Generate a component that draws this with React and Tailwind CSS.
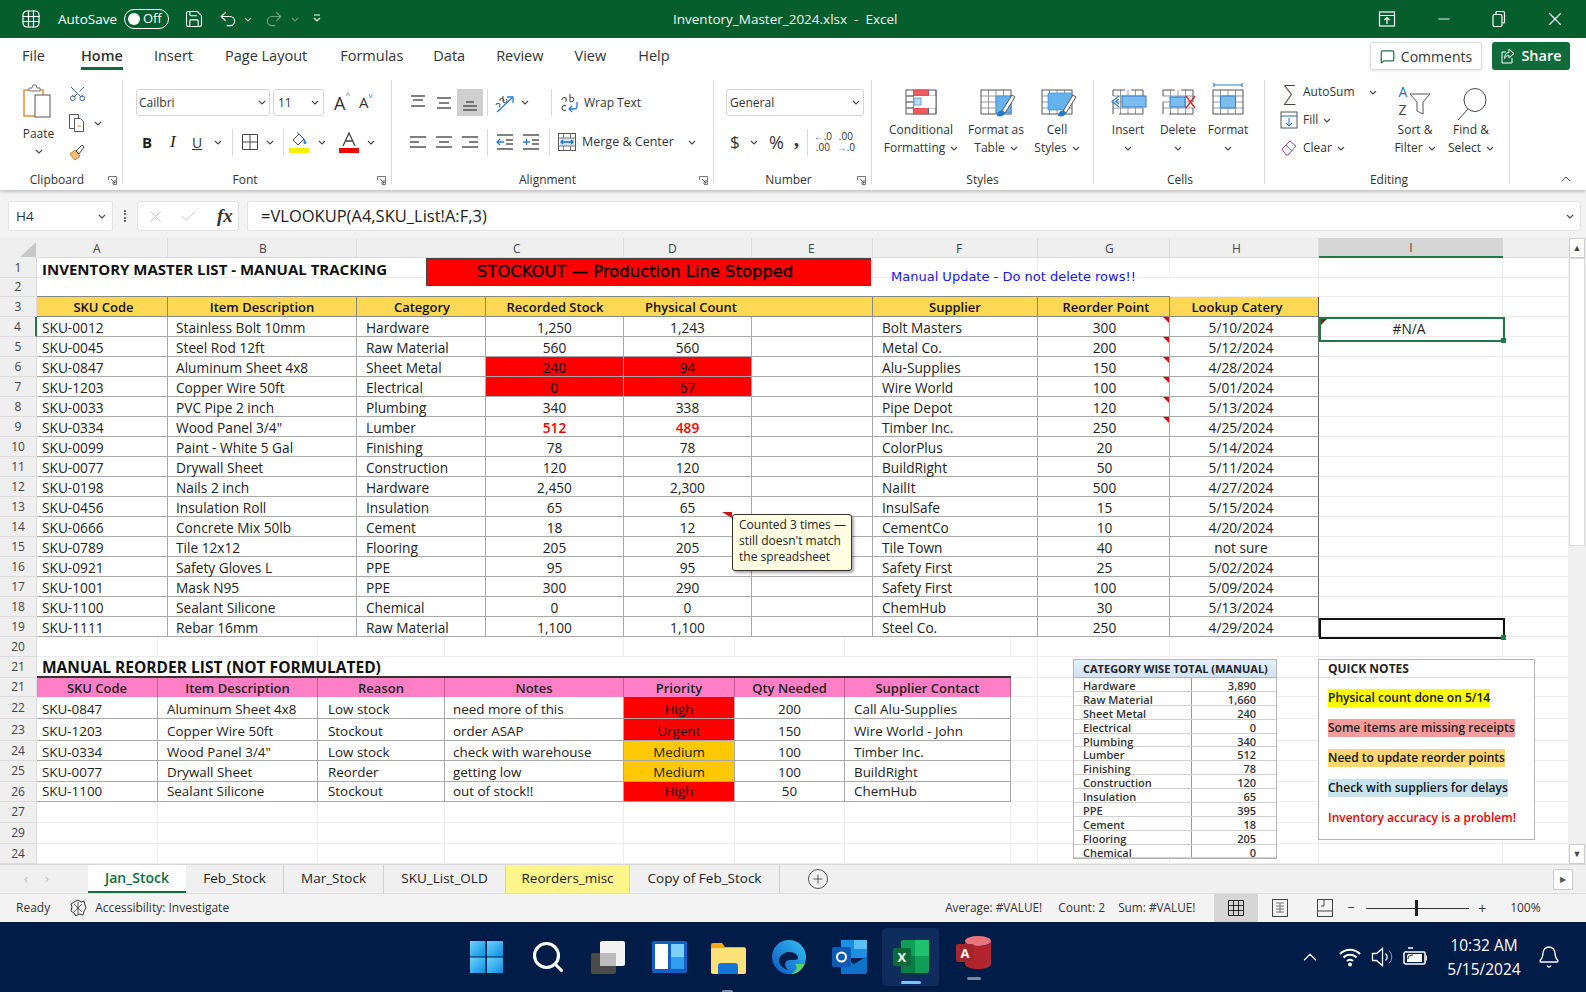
import { Scissors, Search, Bell, ChevronUp, X, Minus, Save, Undo2, Redo2, Check, Plus, MessageSquare } from 'lucide-react'

const MAIN_COLS = 'grid grid-rows-1 grid-cols-[131px_189px_129px_138px_128px_121px_165px_132px_149px_184px_65px]'
const LOW_COLS = 'grid grid-rows-1 grid-cols-[121px_160px_127px_179px_111px_110px_166px_27px_132px_149px_184px_65px]'

const stock = [
  [4, 'SKU-0012', 'Stainless Bolt 10mm', 'Hardware', '1,250', '1,243', 'Bolt Masters', '300', '5/10/2024'],
  [5, 'SKU-0045', 'Steel Rod 12ft', 'Raw Material', '560', '560', 'Metal Co.', '200', '5/12/2024'],
  [6, 'SKU-0847', 'Aluminum Sheet 4x8', 'Sheet Metal', '240', '94', 'Alu-Supplies', '150', '4/28/2024'],
  [7, 'SKU-1203', 'Copper Wire 50ft', 'Electrical', '0', '67', 'Wire World', '100', '5/01/2024'],
  [8, 'SKU-0033', 'PVC Pipe 2 inch', 'Plumbing', '340', '338', 'Pipe Depot', '120', '5/13/2024'],
  [9, 'SKU-0334', 'Wood Panel 3/4"', 'Lumber', '512', '489', 'Timber Inc.', '250', '4/25/2024'],
  [10, 'SKU-0099', 'Paint - White 5 Gal', 'Finishing', '78', '78', 'ColorPlus', '20', '5/14/2024'],
  [11, 'SKU-0077', 'Drywall Sheet', 'Construction', '120', '120', 'BuildRight', '50', '5/11/2024'],
  [12, 'SKU-0198', 'Nails 2 inch', 'Hardware', '2,450', '2,300', 'NailIt', '500', '4/27/2024'],
  [13, 'SKU-0456', 'Insulation Roll', 'Insulation', '65', '65', 'InsulSafe', '15', '5/15/2024'],
  [14, 'SKU-0666', 'Concrete Mix 50lb', 'Cement', '18', '12', 'CementCo', '10', '4/20/2024'],
  [15, 'SKU-0789', 'Tile 12x12', 'Flooring', '205', '205', 'Tile Town', '40', 'not sure'],
  [16, 'SKU-0921', 'Safety Gloves L', 'PPE', '95', '95', 'Safety First', '25', '5/02/2024'],
  [17, 'SKU-1001', 'Mask N95', 'PPE', '300', '290', 'Safety First', '100', '5/09/2024'],
  [18, 'SKU-1100', 'Sealant Silicone', 'Chemical', '0', '0', 'ChemHub', '30', '5/13/2024'],
  [19, 'SKU-1111', 'Rebar 16mm', 'Raw Material', '1,100', '1,100', 'Steel Co.', '250', '4/29/2024'],
]

const reorders = [
  [22, 'h-[22px]', 'SKU-0847', 'Aluminum Sheet 4x8', 'Low stock', 'need more of this', 'High', '200', 'Call Alu-Supplies'],
  [23, 'h-[22px]', 'SKU-1203', 'Copper Wire 50ft', 'Stockout', 'order ASAP', 'Urgent', '150', 'Wire World - John'],
  [24, 'h-[20px]', 'SKU-0334', 'Wood Panel 3/4"', 'Low stock', 'check with warehouse', 'Medium', '100', 'Timber Inc.'],
  [25, 'h-[21px]', 'SKU-0077', 'Drywall Sheet', 'Reorder', 'getting low', 'Medium', '100', 'BuildRight'],
  [26, 'h-[20px]', 'SKU-1100', 'Sealant Silicone', 'Stockout', 'out of stock!!', 'High', '50', 'ChemHub'],
]

const categories = [
  ['Hardware', '3,890'], ['Raw Material', '1,660'], ['Sheet Metal', '240'], ['Electrical', '0'], ['Plumbing', '340'],
  ['Lumber', '512'], ['Finishing', '78'], ['Construction', '120'], ['Insulation', '65'], ['PPE', '395'],
  ['Cement', '18'], ['Flooring', '205'], ['Chemical', '0'],
]

function Chevron({ className = '' }) {
  return (
    <svg width="8" height="5" viewBox="0 0 8 5" className={`shrink-0 ${className}`}>
      <path d="M1 1l3 3 3-3" fill="none" stroke="#444" strokeWidth="1.1" />
    </svg>
  )
}

function Launcher() {
  return (
    <svg width="9" height="9" viewBox="0 0 9 9" className="justify-self-end mr-[5px]">
      <path d="M.5 4V.5H8.5V8.5H5" fill="none" stroke="#777" />
      <path d="M3 3l4 4M7 4v3H4" fill="none" stroke="#555" />
    </svg>
  )
}

function Group({ width, label, pad = '', launcher, children }) {
  return (
    <div className={`${width} h-[104px] border-r border-[#d9d9d9] flex flex-col shrink-0`}>
      <div className="h-[93px] shrink-0 flex">{children}</div>
      <div className="grid grid-cols-[1fr_auto_1fr] items-center h-[14px] shrink-0 text-[12px] leading-[14px] text-[#333]">
        <span />
        <span className={pad}>{label}</span>
        {launcher ? <Launcher /> : <span />}
      </div>
    </div>
  )
}

function BigButton({ width, lines, icon }) {
  return (
    <div className={`${width} flex flex-col items-center pt-[8px] shrink-0`}>
      <div className="h-[33px] flex items-start justify-center">{icon}</div>
      {lines.map((l, i) => (
        <div key={i} className="h-[18px] flex items-center gap-[5px] text-[12px] leading-[18px] text-[#333] whitespace-nowrap">
          {l}{i === 1 && <Chevron />}
        </div>
      ))}
    </div>
  )
}

function VSep({ className = '' }) {
  return <div className={`w-px h-[27px] bg-[#d9d9d9] shrink-0 ${className}`} />
}

function Lines({ ys, x1 = [3, 3, 3], x2 = [19, 19, 19] }) {
  return (
    <svg width="22" height="20" viewBox="0 0 22 20">
      {ys.map((y, i) => <line key={i} x1={x1[i]} x2={x2[i]} y1={y} y2={y} stroke="#555" strokeWidth="1.5" />)}
    </svg>
  )
}

function TableIcon({ children, cuts }) {
  return (
    <svg width="36" height="28" viewBox="0 0 36 28" className="overflow-visible">
      <rect x="3" y="2" width="30" height="24" fill="#fff" />
      <path d="M3 8h30M3 14h30M3 20h30M10.500 2v24M18 2v24M25.500 2v24" stroke="#999" fill="none" />
      <rect x="3" y="2" width="30" height="24" fill="none" stroke="#555" strokeDasharray={cuts} />
      {children}
    </svg>
  )
}

function Brush() {
  return (
    <>
      <path d="M24 23L34 7l3 2-10 16z" fill="#fff" stroke="#555" />
      <path d="M19 28c0-4 3-6 6-5l2 2c-1 3-4 4-8 3z" fill="#1f7dcc" />
    </>
  )
}

function TitleBar() {
  return (
    <div className="h-[38px] bg-[#075e2d] text-white flex items-center text-[13.5px] shrink-0 relative">
      <svg width="20" height="20" viewBox="0 0 20 20" className="ml-[21px]">
        <g fill="none" stroke="#fff" strokeWidth="1.2">
          <rect x="2" y="2" width="16" height="16" rx="4" />
          <path d="M7.500 1.500v17M12.500 1.500v17M1.500 7.500h17M1.500 12.500h17" />
        </g>
      </svg>
      <span className="ml-[17px]">AutoSave</span>
      <div className="ml-[7px] w-[45px] h-[20px] rounded-full border border-white flex items-center pl-[3px] gap-[3px] text-[13px]">
        <span className="w-[12px] h-[12px] rounded-full bg-white" />
        <span>Off</span>
      </div>
      <Save size={20} strokeWidth={1.3} className="ml-[15px]" />
      <Undo2 size={20} strokeWidth={1.4} className="ml-[14px]" />
      <Chevron className="ml-[6px] invert" />
      <Redo2 size={20} strokeWidth={1.4} className="ml-[12px] text-[#6f9f84]" />
      <Chevron className="ml-[7px] invert opacity-60" />
      <svg width="10" height="10" viewBox="0 0 10 10" className="ml-[13px]">
        <path d="M2 1h6M2 4l3 3 3-3" fill="none" stroke="#fff" strokeWidth="1.2" />
      </svg>
      <div className="ml-[351px] w-[226px] whitespace-pre text-[13.500px] text-[#f1f5f2]">Inventory_Master_2024.xlsx  -  Excel</div>
      <svg width="18" height="18" viewBox="0 0 18 18" className="ml-[479px]">
        <g fill="none" stroke="#fff" strokeWidth="1.2">
          <rect x="1.500" y="2" width="15" height="14" />
          <path d="M1.500 5.500h15M9 8v6M6.500 10L9 7.500l2.500 2.500" />
        </g>
      </svg>
      <Minus size={18} strokeWidth={1.2} className="ml-[39px]" />
      <svg width="16" height="18" viewBox="0 0 16 18" className="ml-[38px]">
        <g fill="none" stroke="#fff" strokeWidth="1.2">
          <rect x="2" y="4.500" width="9" height="12" rx="1.500" />
          <path d="M5 4V2.500A1 1 0 0 1 6 1.500h6A1.500 1.500 0 0 1 13.500 3v9a1 1 0 0 1-1 1H11.500" />
        </g>
      </svg>
      <X size={22} strokeWidth={1.2} className="ml-[37px]" />
    </div>
  )
}

function TabRow() {
  const tabs = [['File', 'ml-[22px]'], ['Home', 'ml-[36px] font-semibold'], ['Insert', 'ml-[31px]'], ['Page Layout', 'ml-[32px]'], ['Formulas', 'ml-[33px]'], ['Data', 'ml-[30px]'], ['Review', 'ml-[31px]'], ['View', 'ml-[31px]'], ['Help', 'ml-[32px]']]
  return (
    <div className="h-[38px] bg-white flex items-center text-[14.500px] text-[#333] shrink-0 pb-[2px]">
      {tabs.map(([t, cls]) => (
        <div key={t} className={`${cls} relative h-[36px] flex items-center`}>
          {t}
          {t === 'Home' && <span className="absolute left-0 right-0 top-[29px] h-[3px] bg-[#0f6b3a]" />}
        </div>
      ))}
      <div className="ml-auto w-[112px] h-[28px] border border-[#dcdcdc] rounded-[3px] flex items-center justify-center gap-[6px] text-[14px] shadow-sm">
        <MessageSquare size={15} className="text-[#1e7a46]" />
        Comments
      </div>
      <div className="ml-[10px] mr-[16px] w-[78px] h-[28px] bg-[#0f6b3a] text-white rounded-[3px] flex items-center justify-center gap-[6px] font-semibold">
        <svg width="15" height="16" viewBox="0 0 15 16">
          <path d="M6 4H2v11h10V10M9 1l5 4.500-5 4.500V7.500C6 7.500 5 9 4.500 11c0-4 1.500-6.500 4.500-6.500z" fill="none" stroke="#fff" />
        </svg>
        Share
      </div>
    </div>
  )
}

function Ribbon() {
  return (
    <div className="h-[114px] pt-[4px] bg-white flex items-start shrink-0 shadow-[0_2px_3px_rgba(0,0,0,0.2)] relative z-10">
      <Group width="w-[123px]" label="Clipboard" launcher pad="pr-[8px]">
        <div className="w-[66px] pl-[13px] pr-[2px] flex flex-col items-center pt-[4px]">
          <svg width="36" height="34" viewBox="0 0 36 34">
            <path d="M3 6h19v26H3z" fill="#fff" stroke="#e69138" strokeWidth="1.500" />
            <path d="M8 6V4h3l1-3h3l1 3h3v3H8z" fill="#fff" stroke="#777" />
            <rect x="14" y="11" width="15" height="22" fill="#fff" stroke="#555" />
          </svg>
          <div className="text-[12px] text-[#333] mt-[7px] leading-[18px]">Paate</div>
          <Chevron className="mt-[6px]" />
        </div>
        <div className="flex flex-col items-start pl-[2px] pt-[2px]">
          <Scissors size={19} strokeWidth={1.2} className="text-[#2a5d8f] rotate-[-90deg] mt-[2px]" />
          <div className="flex items-center gap-[8px] mt-[10px]">
            <svg width="18" height="20" viewBox="0 0 18 20">
              <g fill="#fff" stroke="#555">
                <path d="M1.500 1.500h9v14h-9z" />
                <path d="M6.500 5.500h6l3 3v10h-9z" />
              </g>
              <path d="M9 13h4" stroke="#e69138" />
            </svg>
            <Chevron />
          </div>
          <svg width="18" height="18" viewBox="0 0 18 18" className="mt-[10px]">
            <path d="M2 11l5-4 5 6-5 4z" fill="#f5c07a" stroke="#d9761f" />
            <path d="M8 8l6-6 2 2-5 7z" fill="#fff" stroke="#444" />
          </svg>
        </div>
      </Group>

      <Group width="w-[269px]" label="Font" launcher pad="pr-[24px]">
        <div className="pl-[13px] pt-[9px] flex flex-col">
          <div className="flex items-center h-[27px]">
            <div className="w-[134px] h-[27px] border border-[#d4d4d4] rounded-[3px] flex items-center justify-between px-[2px] pr-[3px] text-[12px] text-[#333]">Cailbri<Chevron /></div>
            <div className="ml-[3px] w-[51px] h-[27px] border border-[#d4d4d4] rounded-[3px] flex items-center justify-between px-[4px] text-[12px] text-[#333]">11<Chevron /></div>
            <span className="ml-[10px] text-[18px] text-[#333] leading-none">A<sup className="text-[8px] text-[#666] align-[8px]">^</sup></span>
            <span className="ml-[9px] text-[15px] text-[#333] leading-none">A<sup className="text-[8px] text-[#2b7cd3] align-[6px]">v</sup></span>
          </div>
          <div className="flex items-center h-[28px] mt-[12px] text-[#222]">
            <span className="ml-[6px] w-[12px] font-bold text-[15px]">B</span>
            <span className="ml-[16px] w-[10px] italic font-['Liberation_Serif'] text-[17px]">I</span>
            <span className="ml-[12px] w-[12px] underline text-[14px] text-[#333]">U</span>
            <Chevron className="ml-[10px]" />
            <VSep className="ml-[10px]" />
            <svg width="18" height="18" viewBox="0 0 18 18" className="ml-[8px]">
              <path d="M1.500 1.500h15v15h-15zM9 1.500v15M1.500 9h15" fill="none" stroke="#444" />
            </svg>
            <Chevron className="ml-[7px]" />
            <VSep className="ml-[9px]" />
            <svg width="20" height="22" viewBox="0 0 20 22" className="ml-[5px]">
              <path d="M4 9l6-6 5 5-6 6z" fill="#fff" stroke="#444" />
              <path d="M10 3L8 1M15 8c1 2 2 3 2 4s-2 1-2 0 0-2 0-4z" fill="#2b7cd3" stroke="#2b7cd3" />
              <rect x="0" y="17" width="20" height="5" fill="#ffee00" />
            </svg>
            <Chevron className="ml-[9px]" />
            <svg width="20" height="22" viewBox="0 0 20 22" className="ml-[13px]">
              <path d="M4 15L10 2l6 13M6.500 10h7" fill="none" stroke="#444" strokeWidth="1.300" />
              <rect x="0" y="17" width="20" height="5" fill="#f00000" />
            </svg>
            <Chevron className="ml-[8px]" />
          </div>
        </div>
      </Group>

      <Group width="w-[322px]" label="Alignment" launcher pad="pr-[10px]">
        <div className="pl-[13px] pt-[9px] flex flex-col">
          <div className="flex items-center h-[27px]">
            <div className="w-[26px] flex justify-center"><Lines ys={[3, 7, 13]} x1={[4, 6, 4]} x2={[18, 16, 18]} /></div>
            <div className="w-[26px] flex justify-center"><Lines ys={[5, 10, 15]} x1={[4, 6, 4]} x2={[18, 16, 18]} /></div>
            <div className="w-[26px] h-[27px] bg-[#cfcfcf] flex items-center justify-center"><Lines ys={[9, 13, 17]} x1={[7, 4, 4]} x2={[15, 18, 18]} /></div>
            <VSep className="ml-[4px]" />
            <svg width="24" height="22" viewBox="0 0 24 22" className="ml-[5px]">
              <path d="M3 13a2 2 0 1 1 3 2M7 9a2 2 0 1 1 3 1M10 4v5a2 2 0 1 0 3-2" fill="none" stroke="#555" strokeWidth="1.100" />
              <path d="M4 20L19 6M14 5l6 0 0 6" fill="none" stroke="#2b7cd3" strokeWidth="1.300" />
            </svg>
            <Chevron className="ml-[4px]" />
            <VSep className="ml-[22px]" />
            <svg width="20" height="20" viewBox="0 0 20 20" className="ml-[7px]">
              <path d="M3 7a2.200 2.200 0 1 1 4 1V5M11 1v7a2.200 2.200 0 1 0 0-3M7 13a2.500 2.500 0 1 0 0 4" fill="none" stroke="#555" strokeWidth="1.100" />
              <path d="M18 9v4a3 3 0 0 1-3 3h-4M13 13l-3 3 3 3" fill="none" stroke="#2b7cd3" strokeWidth="1.300" />
            </svg>
            <span className="ml-[5px] text-[12px] text-[#333]">Wrap Text</span>
          </div>
          <div className="flex items-center h-[28px] mt-[12px]">
            <div className="w-[26px] flex justify-center"><Lines ys={[5, 10, 15]} x2={[19, 12, 19]} /></div>
            <div className="w-[26px] flex justify-center"><Lines ys={[5, 10, 15]} x1={[3, 6, 3]} x2={[19, 16, 19]} /></div>
            <div className="w-[26px] flex justify-center"><Lines ys={[5, 10, 15]} x1={[3, 10, 3]} /></div>
            <VSep className="ml-[4px]" />
            <svg width="20" height="18" viewBox="0 0 20 18" className="ml-[7px]">
              <path d="M2 2h16M11 7h7M11 11h7M2 16h16" stroke="#555" fill="none" strokeWidth="1.300" />
              <path d="M9 9H2M5 6L2 9l3 3" stroke="#2b7cd3" fill="none" strokeWidth="1.300" />
            </svg>
            <svg width="20" height="18" viewBox="0 0 20 18" className="ml-[6px]">
              <path d="M2 2h16M11 7h7M11 11h7M2 16h16" stroke="#555" fill="none" strokeWidth="1.300" />
              <path d="M2 9h7M5.500 6v6" stroke="#2b7cd3" fill="none" strokeWidth="1.300" />
            </svg>
            <VSep className="ml-[8px]" />
            <svg width="20" height="20" viewBox="0 0 20 20" className="ml-[7px]">
              <rect x="1.500" y="1.500" width="17" height="17" fill="#fff" stroke="#555" />
              <rect x="3" y="6" width="14" height="8" fill="#cfe4f7" />
              <path d="M1.500 6h17M1.500 14h17M6.500 1.500V6M13.500 1.500V6M6.500 14v4.500M13.500 14v4.500" stroke="#777" />
              <path d="M4 10h12M6 8l-2 2 2 2M14 8l2 2-2 2" stroke="#1f6fc4" fill="none" strokeWidth="1.300" />
            </svg>
            <span className="ml-[5px] text-[12.500px] text-[#333]">Merge &amp; Center</span>
            <Chevron className="ml-[14px]" />
          </div>
        </div>
      </Group>

      <Group width="w-[158px]" label="Number" launcher pad="pr-[8px]">
        <div className="pl-[12px] pt-[9px] flex flex-col">
          <div className="w-[138px] h-[27px] border border-[#d4d4d4] rounded-[3px] flex items-center justify-between px-[3px] text-[12px] text-[#333]">General<Chevron /></div>
          <div className="flex items-center h-[28px] mt-[12px] text-[#333]">
            <span className="w-[14px] text-[17px] ml-[4px]">$</span>
            <Chevron className="ml-[6px]" />
            <span className="ml-[11px] text-[18px]">%</span>
            <span className="ml-[10px] text-[20px] font-bold font-['Liberation_Serif'] leading-none mt-[-6px]">,</span>
            <VSep className="ml-[8px]" />
            <div className="ml-[5px] w-[20px] text-[10px] leading-[11px] text-center"><span className="text-[#1f6fc4]">←</span>.0<br />.00</div>
            <div className="ml-[3px] w-[20px] text-[10px] leading-[11px] text-center">.00<br /><span className="text-[#1f6fc4]">→</span>.0</div>
          </div>
        </div>
      </Group>

      <Group width="w-[222px]" label="Styles">
        <div className="pl-[14px] flex">
          <BigButton width="w-[70px]" lines={['Conditional', 'Formatting']} icon={
            <TableIcon>
              <rect x="10.500" y="2" width="15" height="6" fill="#f15b5b" stroke="#c33" strokeWidth=".5" />
              <rect x="10.500" y="20" width="15" height="6" fill="#f15b5b" stroke="#c33" strokeWidth=".5" />
              <rect x="11" y="8" width="22" height="12" fill="#fff" />
              <rect x="11" y="10" width="7" height="7" fill="#bcd9f2" stroke="#6aa6d9" />
              <path d="M3 8h8M3 14h8M3 20h8M25.500 20v6M33 2v24" stroke="#666" />
            </TableIcon>
          } />
          <BigButton width="w-[80px]" lines={['Format as', 'Table']} icon={
            <TableIcon>
              <rect x="18" y="8" width="15" height="17" fill="#64b2ee" stroke="#2b7cd3" strokeWidth=".6" />
              <Brush />
            </TableIcon>
          } />
          <BigButton width="w-[42px]" lines={['Cell', 'Styles']} icon={
            <TableIcon>
              <path d="M9 5h24v8L26 22H9z" fill="#64b2ee" stroke="#2b7cd3" strokeWidth=".6" />
              <Brush />
            </TableIcon>
          } />
        </div>
      </Group>

      <Group width="w-[171px]" label="Cells" pad="pl-[2px]">
        <div className="pl-[9px] flex">
          <BigButton width="w-[50px]" lines={['Insert', '']} icon={
            <TableIcon cuts="12 6 24 6 30 6">
              <rect x="12" y="8" width="24" height="11" fill="#7cbcef" stroke="#2b7cd3" />
              <path d="M9 8L2 13.500 9 19M9 11l-3 2.500 3 2.500" fill="none" stroke="#2b7cd3" strokeWidth="1.200" />
            </TableIcon>
          } />
          <BigButton width="w-[50px]" lines={['Delete', '']} icon={
            <TableIcon cuts="12 6 24 6 30 6">
              <rect x="10" y="9" width="15" height="10" fill="#7cbcef" stroke="#2b7cd3" />
              <path d="M26 8l9 12M35 8l-9 12" stroke="#e02020" strokeWidth="1.300" />
            </TableIcon>
          } />
          <BigButton width="w-[50px]" lines={['Format', '']} icon={
            <TableIcon>
              <rect x="10.500" y="8" width="15" height="12" fill="#7cbcef" stroke="#2b7cd3" />
              <path d="M4 -3h28M4 -5v4M32 -5v4" stroke="#2b7cd3" strokeWidth="1.200" />
            </TableIcon>
          } />
        </div>
      </Group>

      <Group width="w-[245px]" label="Editing" pad="pl-[4px]">
        <div className="w-[118px] pl-[9px] flex flex-col text-[12px] text-[#333] shrink-0 mt-[-2px]">
          <div className="h-[28px] flex items-center">
            <span className="ml-[9px] w-[15px] text-[21px] text-[#444] leading-none font-light">∑</span>
            <span className="ml-[5px]">AutoSum</span>
            <Chevron className="ml-[14px]" />
          </div>
          <div className="h-[28px] flex items-center">
            <svg width="18" height="18" viewBox="0 0 18 18" className="ml-[6px]">
              <rect x="1" y="1" width="16" height="16" fill="#fff" stroke="#555" />
              <path d="M1 5h16M9 7v8M6 12l3 3 3-3" stroke="#1f6fc4" fill="none" />
            </svg>
            <span className="ml-[5px]">Fill</span>
            <Chevron className="ml-[5px]" />
          </div>
          <div className="h-[28px] flex items-center">
            <svg width="18" height="18" viewBox="0 0 18 18" className="ml-[6px]">
              <path d="M2 10l8-8 6 5-8 9H6z" fill="#fff" stroke="#a4478f" />
              <path d="M6 6l6 6" stroke="#a4478f" />
            </svg>
            <span className="ml-[5px]">Clear</span>
            <Chevron className="ml-[5px]" />
          </div>
        </div>
        <BigButton width="w-[64px]" lines={['Sort &', 'Filter']} icon={
          <div className="flex items-start h-[33px]">
            <div className="flex flex-col text-[14px] leading-[18px] mt-[-5px]">
              <span className="text-[#1f6fc4]">A</span>
              <span className="text-[#444]">Z</span>
            </div>
            <svg width="22" height="22" viewBox="0 0 22 22" className="mt-[5px] ml-[2px]">
              <path d="M1 1h20l-7 8v12l-6-3V9z" fill="#fff" stroke="#555" />
            </svg>
          </div>
        } />
        <BigButton width="w-[48px]" lines={['Find &', 'Select']} icon={
          <svg width="34" height="33" viewBox="0 0 34 33">
            <ellipse cx="21" cy="12" rx="11" ry="11.500" fill="#fff" stroke="#444" />
            <path d="M14 21L4 32" stroke="#444" />
          </svg>
        } />
      </Group>
      <ChevronUp size={16} strokeWidth={1.3} className="ml-[48px] mt-[91px] text-[#333]" />
    </div>
  )
}

function FormulaBar() {
  return (
    <div className="h-[48px] bg-[#f3f3f3] flex items-center shrink-0 pt-[4px]">
      <div className="ml-[8px] w-[105px] h-[30px] bg-white border border-[#e2e2e2] rounded-[3px] flex items-center justify-between pl-[7px] pr-[6px] text-[13.500px] text-[#333]">H4<Chevron /></div>
      <div className="ml-[11px] w-[3px] h-[12px] border-l-2 border-dotted border-[#666]" />
      <div className="ml-[10px] w-[102px] h-[30px] bg-white border border-[#e2e2e2] rounded-[3px] flex items-center pl-[8px] text-[#bbb]">
        <X size={19} strokeWidth={1.1} />
        <Check size={19} strokeWidth={1.1} className="ml-[14px]" />
        <span className="ml-[19px] font-['Liberation_Serif'] italic font-semibold text-[19px] text-[#333]">fx</span>
      </div>
      <div className="ml-[8px] w-[1334px] h-[30px] bg-white border border-[#e2e2e2] rounded-[3px] flex items-center justify-between pl-[13px] pr-[6px] text-[16.500px] text-[#222]">
        =VLOOKUP(A4,SKU_List!A:F,3)
        <Chevron />
      </div>
    </div>
  )
}

function RowHead({ n, active, className = 'h-[20px]' }) {
  return (
    <div className={`w-[37px] shrink-0 ${className} bg-[#efefef] border-b border-r border-[#dcdcdc] flex items-center justify-center text-[12px] text-[#444] ${active ? 'border-r-2 border-r-[#1e7a46]' : ''}`}>{n}</div>
  )
}

function Blank({ border = 'border-[#ececec]' }) {
  return <div className={`border-r border-b ${border}`} />
}

function ColumnHeaders() {
  const heads = [
    ['A', 'pl-[56px]'], ['B', 'pl-[91px]'], ['', ''], ['C', 'pl-[27px]'], ['D', 'pl-[44px]'], ['E', 'pl-[56px]'],
    ['F', 'pl-[83px]'], ['G', 'pl-[67px]'], ['H', 'pl-[62px]'],
  ]
  return (
    <div className="flex h-[20px] bg-[#efefef] text-[12px] text-[#444]">
      <div className="w-[37px] shrink-0 flex items-end justify-end">
        <svg width="19" height="17" viewBox="0 0 19 17"><path d="M18 1v15H2z" fill="#c8c8c8" /></svg>
      </div>
      <div className={MAIN_COLS + ' flex-1 h-[20px] border-b border-[#dcdcdc]'}>
        {heads.map(([h, cls], i) => (
          <div key={i} className={`${h === '' ? '' : 'border-r border-[#dcdcdc]'} leading-[21px] ${cls}`}>{h}</div>
        ))}
        <div className="bg-[#d6d6d6] border-b-2 border-[#1e7a46] text-center leading-[20px] h-[20px]">I</div>
        <div />
      </div>
    </div>
  )
}

function TopRows() {
  const gold = 'bg-[#fdd857] border-b border-[#888] leading-[21px]'
  return (
    <>
      <div className="flex">
        <RowHead n={1} />
        <div className={MAIN_COLS + ' flex-1 h-[20px] bg-white'}>
          <div className="col-span-3 border-b border-[#ececec] pl-[5px] font-bold text-[15px] leading-[22px] text-[#111] whitespace-nowrap">INVENTORY MASTER LIST - MANUAL TRACKING</div>
          <Blank /><Blank /><Blank /><Blank /><Blank /><Blank /><Blank /><div className="border-b border-[#ececec]" />
        </div>
      </div>
      <div className="flex">
        <RowHead n={2} className="h-[19px]" />
        <div className={MAIN_COLS + ' flex-1 h-[19px] bg-white'}>
          <div className="col-span-8 border-b border-[#888]" />
          <Blank /><Blank /><div className="border-b border-[#ececec]" />
        </div>
      </div>
      <div className="flex">
        <RowHead n={3} />
        <div className={MAIN_COLS + ' flex-1 h-[20px] bg-white text-[13px] font-semibold text-[#111]'}>
          <div className={`${gold} border-r text-center pl-[3px]`}>SKU Code</div>
          <div className={`${gold} border-r text-center`}>Item Description</div>
          <div className={`${gold} border-r text-center pl-[2px]`}>Category</div>
          <div className={`${gold} text-center`}>Recorded Stock</div>
          <div className={`${gold} col-span-2 border-r pl-[21px]`}>Physical Count</div>
          <div className={`${gold} border-r text-center`}>Supplier</div>
          <div className={`${gold} border-r text-center pl-[5px]`}>Reorder Point</div>
          <div className={`${gold} border-r border-r-[#555] text-center pr-[14px]`}>Lookup Catery</div>
          <Blank /><div className="border-b border-[#ececec]" />
        </div>
      </div>
    </>
  )
}

function StockRow({ row }) {
  const [n, sku, item, cat, rec, phys, sup, pt, date] = row
  const line = 'border-r border-b border-[#a8a8a8]'
  const red = n === 6 || n === 7
  const flagged = n === 9
  const numCls = `${line} text-center ${red ? 'bg-[#fe0000] text-black' : ''} ${flagged ? 'text-[#f00000] font-semibold' : ''}`
  const comment = n <= 9
  return (
    <div className="flex">
      <RowHead n={n} active={n === 4} />
      <div className={MAIN_COLS + ' flex-1 h-[20px] bg-white text-[13.700px] leading-[21px] text-[#222]'}>
        <div className={`${line} pl-[5px]`}>{sku}</div>
        <div className={`${line} pl-[8px] whitespace-nowrap`}>{item}</div>
        <div className={`${line} pl-[9px]`}>{cat}</div>
        <div className={numCls}>{rec}</div>
        <div className={numCls}>{phys}</div>
        <div className={line} />
        <div className={`${line} pl-[9px]`}>{sup}</div>
        <div className={`${line} text-center pl-[2px] relative`}>
          {pt}
          {comment && <span className="absolute right-0 top-0 border-t-[6px] border-l-[6px] border-t-[#d01010] border-l-transparent" />}
        </div>
        <div className={`${line} border-r-[#666] text-center pr-[6px]`}>{date}</div>
        <Blank /><div className="border-b border-[#ececec]" />
      </div>
    </div>
  )
}

function LowerBlank({ n, h = 'h-[20px]' }) {
  return (
    <div className="flex">
      <RowHead n={n} className={h} />
      <div className={`${LOW_COLS} flex-1 ${h} bg-white`}>
        <Blank /><Blank /><Blank /><Blank /><Blank /><Blank /><Blank /><Blank /><Blank /><Blank /><Blank /><div className="border-b border-[#ececec]" />
      </div>
    </div>
  )
}

function ReorderTable() {
  const line = 'border-r border-b border-[#a8a8a8]'
  const head = 'bg-[#fe7fc6] border-r border-[#c06090] text-center leading-[20px]'
  return (
    <>
      <LowerBlank n={20} />
      <div className="flex">
        <RowHead n={21} className="h-[21px]" />
        <div className={`${LOW_COLS} flex-1 h-[21px] bg-white`}>
          <div className="col-span-6 border-b-2 border-[#333] pl-[5px] font-bold text-[15.500px] leading-[20px] text-[#111] whitespace-nowrap">MANUAL REORDER LIST (NOT FORMULATED)</div>
          <div className="border-b-2 border-[#333]" />
          <Blank /><Blank /><Blank /><Blank /><div className="border-b border-[#ececec]" />
        </div>
      </div>
      <div className="flex">
        <RowHead n={21} className="h-[19px]" />
        <div className={`${LOW_COLS} flex-1 h-[19px] bg-white text-[13px] font-semibold text-[#222]`}>
          <div className={head}>SKU Code</div>
          <div className={head}>Item Description</div>
          <div className={head}>Reason</div>
          <div className={head}>Notes</div>
          <div className={head}>Priority</div>
          <div className={head}>Qty Needed</div>
          <div className={head}>Supplier Contact</div>
          <Blank /><Blank /><Blank /><Blank /><div className="border-b border-[#ececec]" />
        </div>
      </div>
      {reorders.map(([n, h, sku, item, reason, note, pri, qty, contact]) => {
        const cell = `${line} flex items-center ${n === 26 ? '' : 'pt-[3px]'}`
        return (
          <div className="flex" key={n}>
            <RowHead n={n} className={h} />
            <div className={`${LOW_COLS} flex-1 ${h} bg-white text-[13.400px] text-[#222]`}>
              <div className={`${cell} pl-[5px]`}>{sku}</div>
              <div className={`${cell} pl-[9px] whitespace-nowrap`}>{item}</div>
              <div className={`${cell} pl-[10px]`}>{reason}</div>
              <div className={`${cell} pl-[8px] whitespace-nowrap`}>{note}</div>
              <div className={`${cell} justify-center ${pri === 'Medium' ? 'bg-[#ffc800]' : 'bg-[#fe0000] text-black'}`}>{pri}</div>
              <div className={`${cell} justify-center`}>{qty}</div>
              <div className={`${cell} pl-[9px]`}>{contact}</div>
              <Blank /><Blank /><Blank /><Blank /><div className="border-b border-[#ececec]" />
            </div>
          </div>
        )
      })}
      <LowerBlank n={27} h="h-[21px]" />
      <LowerBlank n={29} h="h-[21px]" />
      <LowerBlank n={24} />
    </>
  )
}

function Overlays() {
  const notes = [
    ['Physical count done on 5/14', 'bg-[#ffff00]', 'text-[#111]', 'h-[18px]', 'mt-[11px]'],
    ['Some items are missing receipts', 'bg-[#f79c9c]', 'text-[#222]', 'h-[18px]', 'mt-[12px]'],
    ['Need to update reorder points', 'bg-[#fed672]', 'text-[#111]', 'h-[18px]', 'mt-[12px]'],
    ['Check with suppliers for delays', 'bg-[#c9e3ec]', 'text-[#111]', 'h-[18px]', 'mt-[12px]'],
    ['Inventory accuracy is a problem!', '', 'text-[#f00000]', 'h-[14px]', 'mt-[14px]'],
  ]
  return (
    <>
      {/* red banner merged over C1:E1 */}
      <div className="absolute left-[426px] top-[20px] w-[445px] h-[28px] bg-[#fe0000] border-t-2 border-l border-b border-[#444] flex items-center pl-[50px] font-['DejaVu_Sans'] text-[16.400px] text-black [-webkit-text-stroke:0.3px_#000] whitespace-nowrap">STOCKOUT — Production Line Stopped</div>
      <div className="absolute left-[891px] top-[31px] font-['DejaVu_Sans'] text-[13px] leading-[16px] text-[#1414ff] whitespace-nowrap">Manual Update - Do not delete rows!!</div>

      {/* selected cells */}
      <div className="absolute left-[1319px] top-[79px] w-[186px] h-[25px] border-2 border-[#1e7a46] flex items-center justify-center pr-[6px] text-[13.700px] text-[#222]">
        #N/A
        <span className="absolute left-0 top-0 border-t-[6px] border-r-[6px] border-t-[#6b2a12] border-r-transparent" />
        <span className="absolute right-[-3px] bottom-[-3px] w-[5px] h-[5px] bg-[#1e7a46]" />
      </div>
      <div className="absolute left-[1319px] top-[380px] w-[186px] h-[21px] border-2 border-[#111]">
        <span className="absolute right-[-3px] bottom-[-3px] w-[5px] h-[5px] bg-[#1e7a46]" />
      </div>

      {/* comment */}
      <span className="absolute left-[722px] top-[274px] border-t-[6px] border-l-[10px] border-t-[#d01010] border-l-transparent" />
      <div className="absolute left-[732px] top-[276px] w-[120px] h-[57px] bg-[#fffde2] border border-[#333] rounded-[3px] shadow-[2px_2px_3px_rgba(0,0,0,0.35)] pl-[6px] pt-[2px] text-[12px] leading-[16px] text-[#222] whitespace-nowrap">
        Counted 3 times —<br />still doesn't match<br />the spreadsheet
      </div>

      {/* category totals */}
      <div className="absolute left-[1073px] top-[421px] w-[204px] h-[200px] bg-white border border-[#b5b5b5] text-[11px] font-semibold text-[#333]">
        <div className="h-[18px] bg-gradient-to-b from-[#e3eefa] to-[#d2e3f5] border-b border-[#b5b5b5] pl-[9px] text-[11px] leading-[17px] font-bold text-[#222] whitespace-nowrap">CATEGORY WISE TOTAL (MANUAL)</div>
        {categories.map(([name, val]) => (
          <div key={name} className="grid grid-rows-1 grid-cols-[118px_1fr] h-[13.890px] leading-[15px] border-b border-[#cfcfcf]">
            <div className="pl-[9px] border-r border-[#999]">{name}</div>
            <div className="text-right pr-[20px]">{val}</div>
          </div>
        ))}
      </div>

      {/* quick notes */}
      <div className="absolute left-[1318px] top-[421px] w-[217px] h-[181px] bg-white border border-[#b5b5b5] text-[12px] font-semibold">
        <div className="h-[18px] border-b border-[#ddd] pl-[9px] text-[12px] font-bold leading-[17px] text-[#222]">QUICK NOTES</div>
        <div className="pl-[9px] flex flex-col items-start">
          {notes.map(([t, bg, col, h, mt]) => (
            <div key={t} className={`${bg} ${col} ${h} ${mt} flex items-center whitespace-nowrap`}>{t}</div>
          ))}
        </div>
      </div>
    </>
  )
}

function ScrollBar() {
  return (
    <div className="w-[18px] shrink-0 bg-[#f0f0f0] flex flex-col">
      <div className="h-[20px] mx-[1px] bg-white border border-[#ccc] flex items-center justify-center text-[9px] text-[#444]">▲</div>
      <div className="h-[288px] mx-[1px] bg-white border border-[#ddd]" />
      <div className="flex-1" />
      <div className="h-[20px] mx-[1px] bg-white border border-[#ccc] flex items-center justify-center text-[9px] text-[#444]">▼</div>
    </div>
  )
}

function SheetTabs() {
  const tabs = [
    ['Feb_Stock', 'w-[98px] bg-[#f0f0f0]'], ['Mar_Stock', 'w-[100px] bg-[#f0f0f0]'], ['SKU_List_OLD', 'w-[122px] bg-[#f0f0f0]'],
    ['Reorders_misc', 'w-[124px] bg-[#fdf48c]'], ['Copy of Feb_Stock', 'w-[150px] bg-[#f0f0f0]'],
  ]
  return (
    <div className="h-[29px] bg-[#f0f0f0] border-t border-[#d8d8d8] flex items-stretch text-[13.500px] text-[#222] shrink-0">
      <div className="w-[88px] flex items-center pl-[24px] gap-[17px] text-[#bbb] text-[13px]"><span>‹</span><span>›</span></div>
      <div className="w-[98px] bg-white border-b-2 border-[#0f6b3a] text-[#0f6b3a] font-semibold text-[14px] flex items-center justify-center pb-[2px]">Jan_Stock</div>
      {tabs.map(([t, cls]) => (
        <div key={t} className={`${cls} border-r border-[#cfcfcf] flex items-center justify-center pb-[2px]`}>{t}</div>
      ))}
      <div className="ml-[28px] self-center w-[20px] h-[20px] rounded-full border border-[#555] flex items-center justify-center">
        <Plus size={14} strokeWidth={1.2} />
      </div>
      <div className="ml-auto mr-[13px] self-center w-[20px] h-[21px] bg-white border border-[#ccc] flex items-center justify-center text-[8px] text-[#555]">▶</div>
    </div>
  )
}

function StatusBar() {
  return (
    <div className="h-[29px] bg-[#f3f3f3] border-t border-[#dedede] flex items-center text-[12px] text-[#333] shrink-0">
      <span className="ml-[16px]">Ready</span>
      <svg width="18" height="18" viewBox="0 0 18 18" className="ml-[19px]">
        <path d="M9 1l3 2 3-1 1 4 1 3-2 3-1 4-4-1-3 2-2-3-3-2 1-4-1-3 3-2z" fill="none" stroke="#333" />
        <path d="M5 5l8 8M13 5l-8 8M9 3v12" stroke="#333" strokeWidth=".8" />
      </svg>
      <span className="ml-[8px]">Accessibility: Investigate</span>
      <span className="ml-[716px] w-[113px] text-[11.800px]">Average: #VALUE!</span>
      <span className="w-[60px]">Count: 2</span>
      <span className="w-[96px] text-[11.800px]">Sum: #VALUE!</span>
      <div className="w-[44px] h-[28px] bg-[#d6d6d6] flex items-center justify-center">
        <svg width="16" height="16" viewBox="0 0 16 16"><path d="M.5.500h15v15H.5zM5.500.5v15M10.500.5v15M.5 5.500h15M.5 10.500h15" fill="none" stroke="#222" /></svg>
      </div>
      <svg width="16" height="18" viewBox="0 0 16 18" className="ml-[14px]">
        <rect x=".5" y=".5" width="15" height="17" fill="none" stroke="#444" />
        <path d="M4 4h8M4 7h8M4 10h8M4 13h8M8 4v10" stroke="#777" />
      </svg>
      <svg width="16" height="18" viewBox="0 0 16 18" className="ml-[29px]">
        <rect x=".5" y=".5" width="15" height="17" fill="none" stroke="#444" />
        <path d="M.5 12h15M7 .5V7h-3" stroke="#444" fill="none" />
      </svg>
      <span className="ml-[14px] w-[8px] text-[13px]">−</span>
      <div className="ml-[11px] w-[103px] h-px bg-[#333] flex items-center pl-[49px]">
        <span className="w-[3px] h-[16px] bg-[#222]" />
      </div>
      <span className="ml-[9px] text-[14px]">+</span>
      <span className="ml-[24px]">100%</span>
    </div>
  )
}

function Taskbar() {
  return (
    <div className="flex-1 bg-[#011c47] flex items-center text-white min-h-0">
      <svg width="33" height="32" viewBox="0 0 33 32" className="ml-[470px]">
        <defs>
          <linearGradient id="win" x1="0" y1="0" x2="1" y2="1"><stop offset="0" stopColor="#6fd3fa" /><stop offset="1" stopColor="#0a8fe6" /></linearGradient>
        </defs>
        <rect width="15.500" height="15.500" fill="url(#win)" />
        <rect x="17" width="16" height="15.500" fill="url(#win)" />
        <rect y="16.500" width="15.500" height="15.500" fill="url(#win)" />
        <rect x="17" y="16.500" width="16" height="15.500" fill="url(#win)" />
      </svg>
      <Search size={36} strokeWidth={2.1} className="ml-[27px] text-white" />
      <svg width="35" height="33" viewBox="0 0 35 33" className="ml-[25px]">
        <rect x="0" y="12" width="25" height="21" rx="2" fill="#4a4a4a" />
        <rect x="9" y="0" width="25" height="25" rx="2" fill="#f2f2f2" />
        <rect x="9" y="12" width="16" height="13" fill="#bdbdbd" />
      </svg>
      <svg width="35" height="32" viewBox="0 0 35 32" className="ml-[26px]">
        <rect width="35" height="32" rx="2" fill="#0f5fc4" />
        <rect x="3" y="3" width="13" height="25" fill="#fff" />
        <rect x="19" y="3" width="13" height="13" fill="#7fd0f8" />
        <rect x="19" y="16" width="13" height="12" fill="#2f9df0" />
      </svg>
      <div className="ml-[23px] w-[36px] h-[49px] relative">
        <svg width="36" height="32" viewBox="0 0 36 32" className="mt-[9px]">
          <path d="M1 3a2 2 0 0 1 2-2h9l3 4h19a2 2 0 0 1 2 2v24H1z" fill="#f3a712" />
          <rect x="1" y="6" width="35" height="26" rx="2" fill="#fce17a" />
          <path d="M8 32V24a3 3 0 0 1 3-3h14a3 3 0 0 1 3 3v8z" fill="#1673d9" />
        </svg>
        <span className="absolute left-[12px] bottom-[-11px] w-[11px] h-[3px] rounded-full bg-[#7c8aa5]" />
      </div>
      <svg width="36" height="36" viewBox="0 0 36 36" className="ml-[25px]">
        <defs>
          <linearGradient id="edge" x1="0" y1="1" x2="1" y2="0"><stop offset="0" stopColor="#0b57c4" /><stop offset="1" stopColor="#35c1f1" /></linearGradient>
        </defs>
        <circle cx="18" cy="18" r="17" fill="url(#edge)" />
        <path d="M35 20c-1 9-8 15-15 15 6-3 7-8 4-10h9c1-1 2-3 2-5z" fill="#58d36a" />
        <path d="M18 13c6 0 9 3 9 6 0 2-3 2-8 2-5 0-7 5-2 10-7-2-11-8-8-13 2-3 5-5 9-5z" fill="#011c47" />
      </svg>
      <svg width="36" height="36" viewBox="0 0 36 36" className="ml-[25px]">
        <rect x="9" y="1" width="26" height="18" fill="#1d8fe0" />
        <rect x="22" y="1" width="13" height="9" fill="#5cc0f5" />
        <path d="M9 17l13 8 13-8v16a2 2 0 0 1-2 2H9z" fill="#0f72c9" />
        <rect x="0" y="8" width="19" height="20" rx="2" fill="#0d5bb5" />
        <circle cx="9.500" cy="18" r="4.500" fill="none" stroke="#fff" strokeWidth="2" />
      </svg>
      <div className="ml-[14px] w-[57px] h-[58px] bg-[#0f2d5c] rounded-[5px] flex flex-col items-center pt-[12px]">
        <svg width="36" height="33" viewBox="0 0 36 33">
          <rect x="8" y="0" width="28" height="33" rx="2" fill="#0f9d58" />
          <rect x="22" y="0" width="14" height="16" fill="#21c06f" />
          <rect x="8" y="16" width="14" height="17" fill="#0c7a43" />
          <rect x="0" y="8" width="18" height="18" rx="2" fill="#0b6b38" />
          <text x="4.500" y="22" fontSize="13" fontWeight="700" fill="#fff" fontFamily="Open Sans">X</text>
        </svg>
        <span className="mt-[8px] w-[20px] h-[3px] rounded-full bg-[#7dc3f5]" />
      </div>
      <div className="ml-[17px] w-[36px] flex flex-col items-center pt-[2px]">
        <svg width="36" height="33" viewBox="0 0 36 33">
          <ellipse cx="22" cy="5" rx="13" ry="5" fill="#e8737a" />
          <path d="M9 5v23c0 3 6 5 13 5s13-2 13-5V5c0 3-6 5-13 5S9 8 9 5z" fill="#b3252c" />
          <rect x="0" y="8" width="18" height="18" rx="2" fill="#a4262c" />
          <text x="4.500" y="22" fontSize="13" fontWeight="700" fill="#fff" fontFamily="Open Sans">A</text>
        </svg>
        <span className="mt-[8px] w-[14px] h-[3px] rounded-full bg-[#7c8aa5]" />
      </div>
      <ChevronUp size={22} strokeWidth={1.4} className="ml-[307px]" />
      <svg width="24" height="20" viewBox="0 0 24 20" className="ml-[17px]">
        <path d="M2 7a14 14 0 0 1 20 0M5.500 10.500a9 9 0 0 1 13 0M9 14a4 4 0 0 1 6 0" fill="none" stroke="#fff" strokeWidth="2" />
        <circle cx="12" cy="17.500" r="2" fill="#fff" />
      </svg>
      <svg width="24" height="22" viewBox="0 0 24 22" className="ml-[9px]">
        <path d="M1.500 7.500h4l6-5v17l-6-5h-4z" fill="none" stroke="#fff" strokeWidth="1.300" />
        <path d="M14.500 7.500a4.500 4.500 0 0 1 0 7" fill="none" stroke="#fff" strokeWidth="1.300" />
        <path d="M18 4.500a9 9 0 0 1 0 13" fill="none" stroke="#8a9bb8" strokeWidth="1" />
      </svg>
      <svg width="24" height="20" viewBox="0 0 24 20" className="ml-[8px]">
        <path d="M4 5h17a1 1 0 0 1 1 1v10a1 1 0 0 1-1 1H3a2 2 0 0 1-2-2V7a2 2 0 0 1 3-2z" fill="none" stroke="#fff" strokeWidth="1.500" />
        <path d="M23.500 8.500v5" stroke="#fff" strokeWidth="1.500" />
        <path d="M5 7h14v8H4V9z" fill="#fff" />
        <path d="M5 12c0-3 2-4 5-4" stroke="#011c47" fill="none" />
        <path d="M5 1h5" stroke="#fff" strokeWidth="1.500" />
      </svg>
      <div className="ml-[17px] w-[80px] flex flex-col items-center text-[15.500px] leading-[24px] whitespace-nowrap">
        <span>10:32 AM</span>
        <span>5/15/2024</span>
      </div>
      <Bell size={24} strokeWidth={1.3} className="ml-[13px]" />
    </div>
  )
}

export default function App() {
  return (
    <div className="w-[1586px] h-[992px] flex flex-col overflow-hidden bg-white font-['Open_Sans',sans-serif]">
      <TitleBar />
      <TabRow />
      <Ribbon />
      <FormulaBar />
      <div className="h-[626px] flex shrink-0 overflow-hidden">
        <div className="w-[1568px] relative">
          <ColumnHeaders />
          <TopRows />
          {stock.map(r => <StockRow key={r[0]} row={r} />)}
          <ReorderTable />
          <Overlays />
        </div>
        <ScrollBar />
      </div>
      <SheetTabs />
      <StatusBar />
      <Taskbar />
    </div>
  )
}
